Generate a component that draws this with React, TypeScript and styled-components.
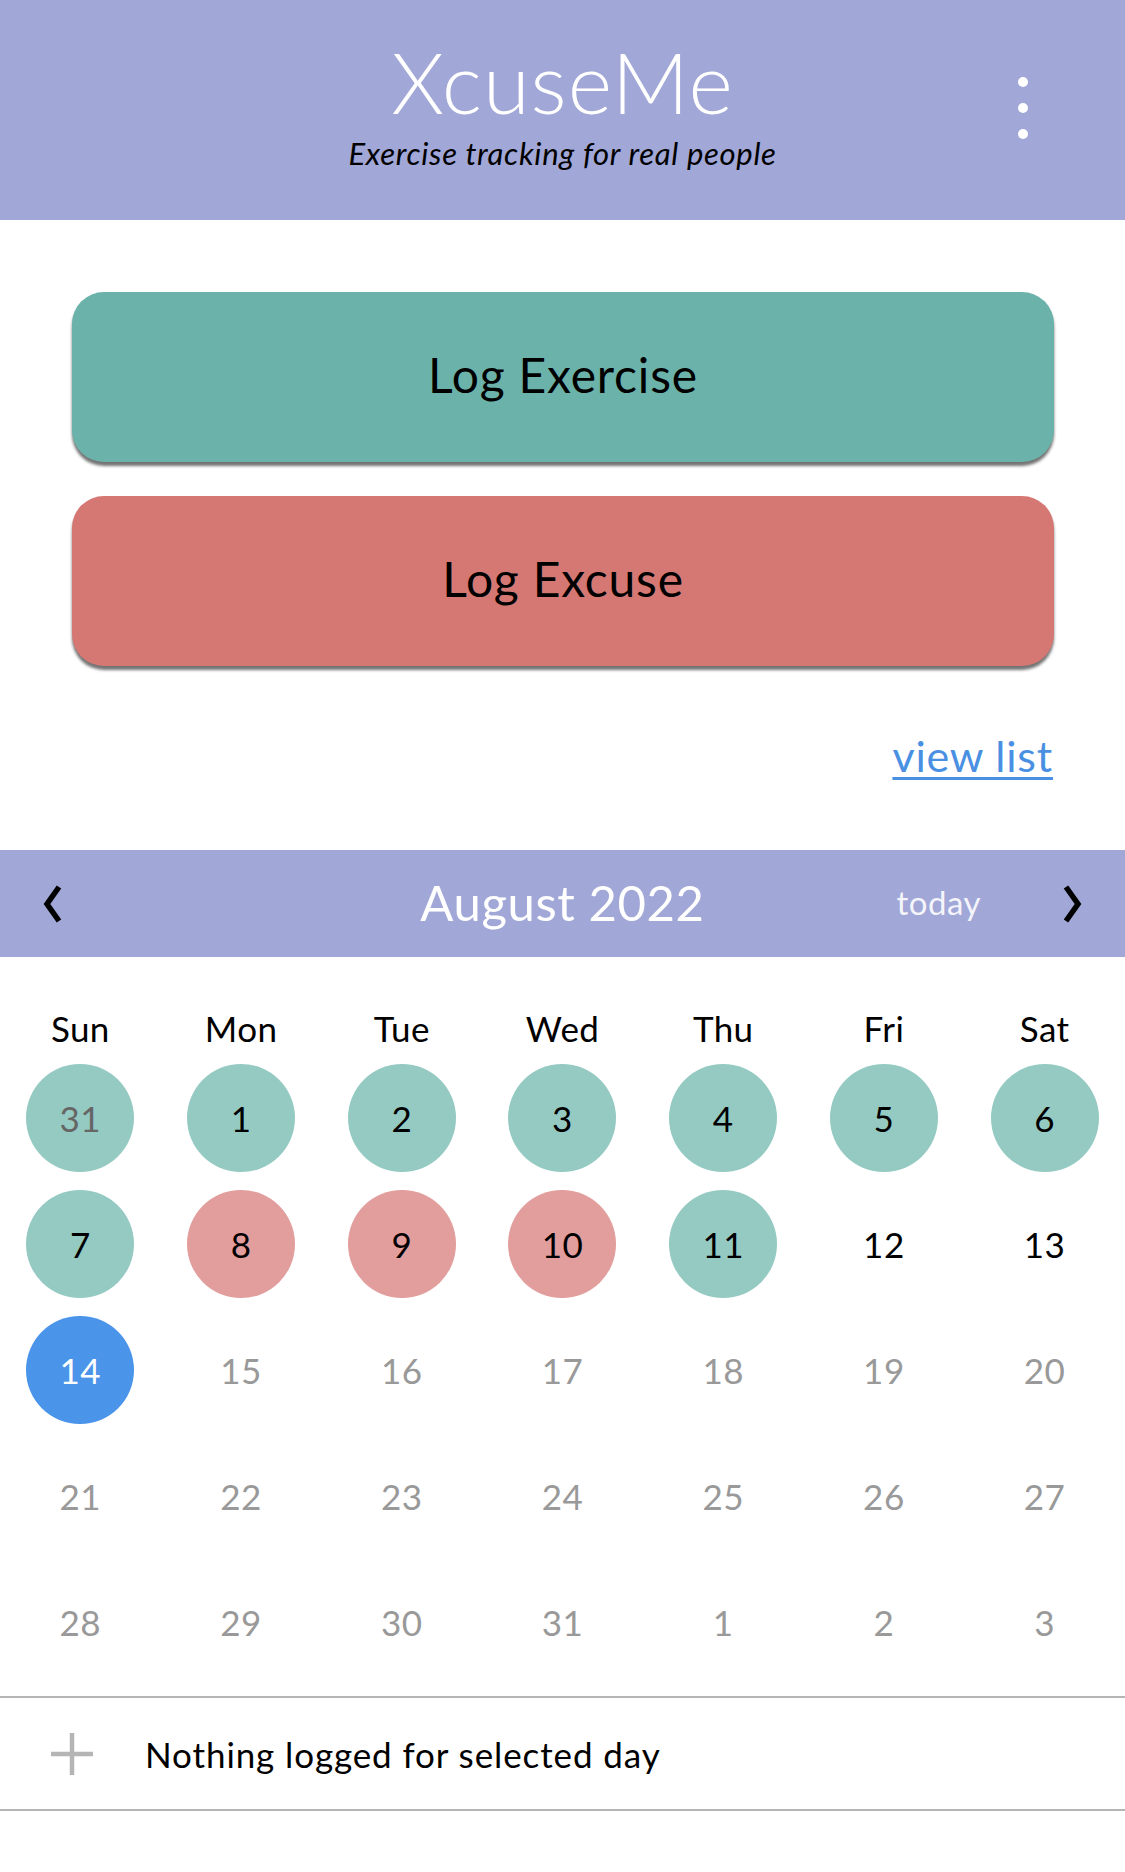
import React from 'react';
import styled, { createGlobalStyle } from 'styled-components';

const GlobalStyle = createGlobalStyle`
  html, body {
    margin: 0;
    padding: 0;
    background: #ffffff;
  }
  body {
    font-family: Lato, "Open Sans", sans-serif;
    color: #000;
  }
`;

type Kind = 'exercise' | 'excuse' | 'selected' | 'past' | 'future' | 'other';

const days: { n: number; kind: Kind; outside?: boolean }[] = [
  { n: 31, kind: 'exercise', outside: true },
  ...Array.from({ length: 31 }, (_, i) => {
    const n = i + 1;
    let kind: Kind = 'future';
    if (n <= 7 || n === 11) kind = 'exercise';
    else if (n >= 8 && n <= 10) kind = 'excuse';
    else if (n === 12 || n === 13) kind = 'past';
    else if (n === 14) kind = 'selected';
    return { n, kind };
  }),
  { n: 1, kind: 'other' as Kind },
  { n: 2, kind: 'other' as Kind },
  { n: 3, kind: 'other' as Kind },
];

const weekdays = ['Sun', 'Mon', 'Tue', 'Wed', 'Thu', 'Fri', 'Sat'];

const bgFor: Record<Kind, string> = {
  exercise: '#94cac2',
  excuse: '#e29d9d',
  selected: '#4a94ea',
  past: 'transparent',
  future: 'transparent',
  other: 'transparent',
};

const App = () => {
  return (
    <>
      <GlobalStyle />
      <Page>
        <Header>
          <span />
          <Brand>
            <Title>XcuseMe</Title>
            <Tagline>Exercise tracking for real people</Tagline>
          </Brand>
          <Kebab>
            <svg width="12" height="64" viewBox="0 0 12 64">
              <circle cx="6" cy="6" r="5" fill="#fff" />
              <circle cx="6" cy="32" r="5" fill="#fff" />
              <circle cx="6" cy="58" r="5" fill="#fff" />
            </svg>
          </Kebab>
        </Header>

        <Actions>
          <BigButton color="#6bb3aa">Log Exercise</BigButton>
          <BigButton color="#d57874">Log Excuse</BigButton>
        </Actions>

        <ListLinkRow>
          <a href="#">view list</a>
        </ListLinkRow>

        <CalBar>
          <NavBtn>
            <svg width="24" height="40" viewBox="0 0 24 40">
              <polyline points="18,3 6,20 18,37" fill="none" stroke="#000" strokeWidth="5.5" strokeLinejoin="miter" />
            </svg>
          </NavBtn>
          <span />
          <Month>August 2022</Month>
          <Today>today</Today>
          <NavBtn>
            <svg width="24" height="40" viewBox="0 0 24 40">
              <polyline points="6,3 18,20 6,37" fill="none" stroke="#000" strokeWidth="5.5" strokeLinejoin="miter" />
            </svg>
          </NavBtn>
        </CalBar>

        <Grid>
          {weekdays.map((w) => (
            <WeekDay key={w}>{w}</WeekDay>
          ))}
          {days.map((d, i) => (
            <Cell key={i}>
              <Day $bg={bgFor[d.kind]} $kind={d.kind} $outside={!!d.outside}>
                {d.n}
              </Day>
            </Cell>
          ))}
        </Grid>

        <LogRow>
          <svg width="44" height="44" viewBox="0 0 44 44">
            <line x1="22" y1="1" x2="22" y2="43" stroke="#b5b5b5" strokeWidth="4.5" />
            <line x1="1" y1="22" x2="43" y2="22" stroke="#b5b5b5" strokeWidth="4.5" />
          </svg>
          <span>Nothing logged for selected day</span>
        </LogRow>
      </Page>
    </>
  );
};

const Page = styled.div`
  width: 1125px;
  min-height: 1872px;
  display: flex;
  flex-direction: column;
`;

const Header = styled.header`
  height: 220px;
  background: #a1a7d6;
  display: grid;
  grid-template-columns: 1fr auto 1fr;
  align-items: start;
`;

const Brand = styled.div`
  display: flex;
  flex-direction: column;
  align-items: center;
  padding-top: 36px;
`;

const Title = styled.h1`
  margin: 0;
  font-family: Lato, sans-serif;
  font-weight: 300;
  font-size: 85px;
  line-height: 90px;
  color: #fff;
  letter-spacing: 1px;
`;

const Tagline = styled.p`
  margin: 9px 0 0;
  font-family: Lato, sans-serif;
  font-style: italic;
  font-size: 31px;
  line-height: 36px;
  letter-spacing: 0.7px;
  color: #000;
`;

const Kebab = styled.div`
  justify-self: end;
  padding: 76px 96px 0 0;
`;

const Actions = styled.section`
  display: flex;
  flex-direction: column;
  gap: 34px;
  padding: 72px 71px 0 72px;
`;

const BigButton = styled.button<{ color: string }>`
  height: 170px;
  border: none;
  border-radius: 32px;
  padding-bottom: 6px;
  background: ${(p) => p.color};
  box-shadow: 0 4px 3px rgba(0, 0, 0, 0.55);
  font-family: Lato, sans-serif;
  font-size: 48px;
  letter-spacing: 0.8px;
  color: #000;
  cursor: pointer;
`;

const ListLinkRow = styled.div`
  display: flex;
  justify-content: flex-end;
  padding: 66px 72px 0 0;
  height: 119px;
  box-sizing: border-box;

  a {
    font-family: Lato, sans-serif;
    font-size: 43px;
    line-height: 48px;
    letter-spacing: 0.8px;
    color: #4a90e2;
    text-decoration: underline;
    text-underline-offset: 5px;
    text-decoration-thickness: 3px;
  }
`;

const CalBar = styled.div`
  height: 107px;
  background: #a1a7d6;
  display: grid;
  grid-template-columns: 106px 1fr auto 1fr 106px;
  align-items: center;
  margin-top: 65px;
`;

const NavBtn = styled.div`
  display: flex;
  justify-content: center;
`;

const Month = styled.div`
  text-align: center;
  font-size: 49px;
  letter-spacing: 0.6px;
  color: #fff;
  padding-bottom: 4px;
`;

const Today = styled.div`
  justify-self: end;
  font-size: 33px;
  letter-spacing: 0.5px;
  color: #f4f4fb;
  padding: 0 38px 4px 0;
`;

const Grid = styled.div`
  display: grid;
  grid-template-columns: repeat(7, 1fr);
  row-gap: 18px;
  padding-top: 50px;
`;

const WeekDay = styled.div`
  text-align: center;
  font-size: 35px;
  line-height: 42px;
  letter-spacing: 0.4px;
  margin-bottom: -3px;
`;

const Cell = styled.div`
  display: flex;
  justify-content: center;
`;

const Day = styled.div<{ $bg: string; $kind: Kind; $outside: boolean }>`
  width: 108px;
  height: 108px;
  border-radius: 50%;
  background: ${(p) => p.$bg};
  display: flex;
  align-items: center;
  justify-content: center;
  font-size: 35px;
  letter-spacing: 0.5px;
  color: ${(p) =>
    p.$outside
      ? '#666'
      : p.$kind === 'selected'
      ? '#fff'
      : p.$kind === 'future' || p.$kind === 'other'
      ? '#999'
      : '#000'};
`;

const LogRow = styled.div`
  margin-top: 20px;
  height: 111px;
  border-top: 2px solid #b5b5b5;
  border-bottom: 2px solid #b5b5b5;
  display: flex;
  align-items: center;
  gap: 51px;
  padding-left: 50px;

  span {
    font-size: 35px;
    letter-spacing: 0.9px;
  }
`;

export default App;
